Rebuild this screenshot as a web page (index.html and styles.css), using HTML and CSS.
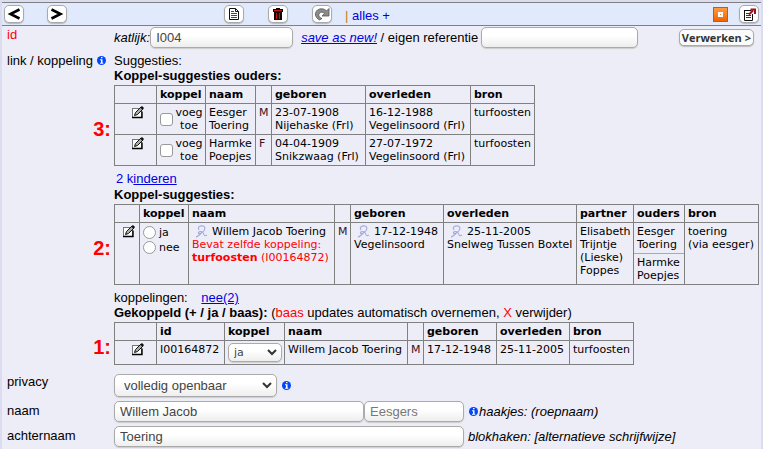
FILE: index.html
```html
<!DOCTYPE html>
<html lang="nl">

<head>
    <meta charset="UTF-8">
    <meta name="viewport" content="width=device-width, initial-scale=1.0">
    <title>Persoon</title>
    <link rel="stylesheet" href="styles.css">
</head>

<body>
    <svg class="symbols" aria-hidden="true">
        <symbol id="edit" viewBox="0 0 13 13">
            <rect x="1.5" y="2.5" width="9" height="9" fill="#fff" stroke="#777" />
            <path d="M1 11.5h10v-6" fill="none" stroke="#000" stroke-width="1.4" />
            <path d="M3.5 9.5l1-3 5.5-5.5 2 2-5.5 5.5z" fill="#aaa" stroke="#111" />
            <path d="M9 1.5l2-1.5 2 2-1.5 2z" fill="#111" />
        </symbol>
        <symbol id="info" viewBox="0 0 9 9">
            <circle cx="4.5" cy="4.5" r="4.5" fill="#0046ff" />
            <path d="M4 1h1.5v1.3H4zM3 3.3h2.5v3.4h.8v1H3v-1h1V4.300H3z" fill="#fff" />
        </symbol>
        <symbol id="sign" viewBox="0 0 13 13">
            <path d="M4 5C2 2 5 .5 8 1c3 .6 2 5-1 6.500C4.500 9 3 9 3.500 7.500 4 6 8 6 8.500 8.500c.3 1.500 1 3 3.500 1.500M6.500 8C5 9.500 3 11.500 1 12" fill="none" stroke="#a3abe0" stroke-width="1.1" />
        </symbol>
    </svg>

    <div class="page">
        <div class="toolbar">
            <div class="nav">
                <button class="btn" aria-label="vorige"><svg width="14" height="12" viewBox="0 0 14 12"><path d="M12.500 1.500L3.500 6l9 4.500" fill="none" stroke="#000" stroke-width="2.600" /></svg></button>
                <button class="btn" aria-label="volgende"><svg width="14" height="12" viewBox="0 0 14 12"><path d="M1.500 1.500l9 4.500-9 4.500" fill="none" stroke="#000" stroke-width="2.600" /></svg></button>
            </div>
            <div class="tools">
                <button class="btn" aria-label="nieuw"><svg width="10" height="12" viewBox="0 0 10 12"><path d="M.5.500h6l3 3v8h-9zM6.500.500v3h3" fill="#fff" stroke="#111" /><path d="M2 3.500h3M2 5.500h6M2 7.500h6M2 9.500h6" stroke="#445" /></svg></button>
                <button class="btn" aria-label="verwijderen"><svg width="10" height="12" viewBox="0 0 10 12"><path d="M3 0h4v1h3v3H0V1h3zM1 4h8v8H1z" fill="#180000" /><path d="M1 2.500h8M3.500 5v6M6.500 5v6" stroke="#c41414" /></svg></button>
                <button class="btn" aria-label="herhalen"><svg width="17" height="14" viewBox="0 0 17 14"><path d="M5.500 13C1 10.500 0 6 3.500 3c3-2 7-1.500 9 1l2.500-2.500V9H8l2.500-2.500C8.500 4.500 6 5 5 7c-.6 1.500 0 3.500 3 4.500z" fill="#8b8b8b" stroke="#555" stroke-width=".8" /></svg></button>
            </div>
            <div class="all"><span class="bar">|</span> <a href="#">alles +</a></div>
            <div class="right">
                <button class="orange" aria-label="venster"><svg width="5" height="5" viewBox="0 0 5 5"><path d="M1 1h3v3H1z" fill="none" stroke="#fff" stroke-width="2" /></svg></button>
                <button class="btn" aria-label="openen"><svg width="13" height="13" viewBox="0 0 13 13"><path d="M1 2.500h7M1.500 2v10.500h8V6" fill="none" stroke="#111" /><path d="M3 5.500h3M3 7.500h5M3 9.500h5" stroke="#333" /><path d="M6 6.500l4-4M7.500 1.500H12V6" fill="none" stroke="#a0101c" stroke-width="2" /></svg></button>
            </div>
        </div>

        <form class="form">
            <div class="row first-row">
                <div class="label red">id</div>
                <div class="line">
                    <label for="ref"><i>katlijk:</i></label><input id="ref" class="field ref" value="I004">
                    <span class="own"><a class="link" href="#"><i>save as new!</i></a> / <label for="own">eigen referentie</label></span>
                    <input id="own" class="field own-ref">
                    <button class="process" type="button">Verwerken &gt;</button>
                </div>
            </div>

            <div class="row links">
                <div class="label">link / koppeling <svg class="info"><use href="#info" /></svg></div>
                <div class="content">
                    <div>Suggesties:</div>
                    <b>Koppel-suggesties ouders:</b>
                    <div class="grid">
                        <span class="step">3:</span>
                        <table class="parents">
                            <colgroup><col class="w42"><col class="w49"><col class="w50"><col class="w16"><col class="w94"><col class="w105"><col class="w64"></colgroup>
                            <tr><th></th><th>koppel</th><th>naam</th><th></th><th>geboren</th><th>overleden</th><th>bron</th></tr>
                            <tr>
                                <td class="edit"><svg class="icon"><use href="#edit" /></svg></td>
                                <td><label class="add"><input class="check" type="checkbox"><span>voeg toe</span></label></td>
                                <td>Eesger Toering</td><td class="sex">M</td>
                                <td>23-07-1908<br>Nijehaske (Frl)</td><td>16-12-1988<br>Vegelinsoord (Frl)</td><td>turfoosten</td>
                            </tr>
                            <tr>
                                <td class="edit"><svg class="icon"><use href="#edit" /></svg></td>
                                <td><label class="add"><input class="check" type="checkbox"><span>voeg toe</span></label></td>
                                <td>Harmke Poepjes</td><td class="sex">F</td>
                                <td>04-04-1909<br>Snikzwaag (Frl)</td><td>27-07-1972<br>Vegelinsoord (Frl)</td><td>turfoosten</td>
                            </tr>
                        </table>
                    </div>

                    <div class="children"><a href="#">2 k<u>inderen</u></a></div>
                    <b>Koppel-suggesties:</b>
                    <div class="grid">
                        <span class="step">2:</span>
                        <table class="persons">
                            <colgroup><col class="w25"><col class="w49"><col class="w146"><col class="w16"><col class="w93"><col class="w133"><col class="w57"><col class="w51"><col class="w74"></colgroup>
                            <tr><th></th><th>koppel</th><th>naam</th><th></th><th>geboren</th><th>overleden</th><th>partner</th><th>ouders</th><th>bron</th></tr>
                            <tr>
                                <td class="edit"><svg class="icon"><use href="#edit" /></svg></td>
                                <td>
                                    <label class="choice"><input class="radio" type="radio" name="koppel">ja</label>
                                    <label class="choice"><input class="radio" type="radio" name="koppel">nee</label>
                                </td>
                                <td><div class="signed"><svg class="sign"><use href="#sign" /></svg>Willem Jacob Toering</div><span class="red">Bevat zelfde koppeling: <b>turfoosten</b> (I00164872)</span></td>
                                <td class="sex">M</td>
                                <td><div class="signed"><svg class="sign"><use href="#sign" /></svg>17-12-1948</div>Vegelinsoord</td>
                                <td><div class="signed"><svg class="sign"><use href="#sign" /></svg>25-11-2005</div>Snelweg Tussen Boxtel</td>
                                <td>Elisabeth Trijntje (Lieske) Foppes</td>
                                <td class="split"><div class="father">Eesger Toering</div><div class="mother">Harmke Poepjes</div></td>
                                <td>toering<br>(via eesger)</td>
                            </tr>
                        </table>
                    </div>

                    <div class="counts">koppelingen: <a class="link" href="#">nee(2)</a></div>
                    <div><b>Gekoppeld (+ / ja / baas):</b> (<span class="red">baas</span> updates automatisch overnemen, <span class="red">X</span> verwijder)</div>
                    <div class="grid">
                        <span class="step">1:</span>
                        <table class="linked">
                            <colgroup><col class="w42"><col class="w68"><col class="w60"><col class="w123"><col class="w16"><col class="w73"><col class="w73"><col class="w64"></colgroup>
                            <tr><th></th><th>id</th><th>koppel</th><th>naam</th><th></th><th>geboren</th><th>overleden</th><th>bron</th></tr>
                            <tr>
                                <td class="edit"><svg class="icon"><use href="#edit" /></svg></td>
                                <td>I00164872</td>
                                <td><select class="field small" aria-label="koppel"><option>ja</option><option>nee</option></select></td>
                                <td>Willem Jacob Toering</td><td class="sex">M</td><td>17-12-1948</td><td>25-11-2005</td><td>turfoosten</td>
                            </tr>
                        </table>
                    </div>
                </div>
            </div>

            <div class="row privacy">
                <label class="label" for="privacy">privacy</label>
                <div class="line"><select id="privacy" class="field open"><option>volledig openbaar</option></select><svg class="info"><use href="#info" /></svg></div>
            </div>
            <div class="row">
                <label class="label" for="name">naam</label>
                <div class="line"><input id="name" class="field first" value="Willem Jacob"><input class="field patronym" aria-label="patroniem" placeholder="Eesgers"><svg class="info"><use href="#info" /></svg><i>haakjes: (roepnaam)</i></div>
            </div>
            <div class="row">
                <label class="label" for="surname">achternaam</label>
                <div class="line"><input id="surname" class="field surname" value="Toering"><i class="note">blokhaken: [alternatieve schrijfwijze]</i></div>
            </div>
        </form>
    </div>
</body>

</html>
```

FILE: styles.css
```css
* {
    box-sizing: border-box;
}

body {
    margin: 0;
    padding: 2px 2px 0;
    background: #dcdcf0;
    color: #000;
    font: 13px/15px "Liberation Sans", Arial, sans-serif;
}

.page {
    min-height: calc(100vh - 2px);
    background: #ededf7;
}

.symbols {
    display: none;
}

svg {
    flex: none;
}

a {
    color: #0000e0;
    text-decoration: none;
}

.link {
    text-decoration: underline;
}

.red {
    color: #f00;
}

/* toolbar */
.toolbar {
    display: flex;
    align-items: center;
    height: 24px;
    padding: 0 2px;
    background: #e0eafc;
    border-top: 1px solid #808080;
    border-bottom: 1px solid #808080;
}

.nav,
.tools,
.right {
    display: flex;
    align-items: center;
    gap: 24px;
}

.nav {
    gap: 23px;
    width: 220px;
}

.all {
    margin-left: 13px;
    padding-top: 2px;
}

.bar {
    color: #c87820;
}

.right {
    gap: 11px;
    margin-left: auto;
}

.btn,
.orange {
    display: flex;
    align-items: center;
    justify-content: center;
    width: 20px;
    height: 18px;
    padding: 0;
    background: #fff;
    border: 1px solid #aaa;
    border-radius: 5px;
    box-shadow: 0 1px 1px #bbb;
}

.orange {
    width: 15px;
    height: 15px;
    background: linear-gradient(#ff9a42, #f06400);
    border-color: #c65a14;
    border-radius: 0;
    box-shadow: none;
}

/* form rows */
.row {
    display: grid;
    grid-template-columns: 107px 1fr;
    padding-left: 5px;
    margin-bottom: 4px;
}

.first-row {
    margin-bottom: 5px;
}

.label {
    padding-top: 2px;
}

.first-row .label,
.links .label,
.privacy .label {
    padding-top: 0;
}

.line {
    display: flex;
    align-items: center;
}

.form {
    padding-top: 1px;
}

.field {
    height: 21px;
    padding: 0 5px;
    color: #444;
    font: 13px/15px "Liberation Sans", Arial, sans-serif;
    background: linear-gradient(#fff 40%, #eee);
    border: 1px solid #aaa;
    border-radius: 5px;
    box-shadow: 0 1px 1px #ccc;
}

.field::placeholder {
    color: #777;
}

select.field {
    padding-right: 16px;
    appearance: none;
    background: url("data:image/svg+xml,%3Csvg xmlns='http://www.w3.org/2000/svg' width='10' height='7'%3E%3Cpath d='M1 1l4 4 4-4' fill='none' stroke='%23333' stroke-width='2'/%3E%3C/svg%3E") no-repeat right 4px center, linear-gradient(#fff 40%, #eee);
}

.ref {
    width: 143px;
}

.own {
    margin: 0 3px 0 8px;
}

.own-ref {
    width: 157px;
}

.process {
    height: 17px;
    margin: 0 7px 0 auto;
    padding: 0 2px;
    color: #333;
    font: bold 11px/14px "Open Sans", sans-serif;
    background: #fbfbfb;
    border: 1px solid #aaa;
    border-radius: 5px;
    box-shadow: 0 1px 1px #bbb;
}

.info {
    width: 9px;
    height: 9px;
}

.line .info {
    margin: 0 1px 0 5px;
}

.open {
    width: 163px;
    height: 23px;
    padding-left: 9px;
}

.privacy {
    margin-top: 9px;
}

.first {
    width: 250px;
}

.patronym {
    width: 100px;
}

.surname {
    width: 350px;
}

.note {
    margin-left: 4px;
}

/* tables */
.grid {
    position: relative;
    margin-top: 2px;
}

.step {
    position: absolute;
    top: calc(50% - 9px);
    right: calc(100% + 3px);
    color: #f00;
    font: bold 20px/24px "Liberation Sans", Arial, sans-serif;
}

table {
    table-layout: fixed;
    width: 0;
    border-collapse: collapse;
    font: 11px/13px "DejaVu Sans", Verdana, sans-serif;
}

th,
td {
    height: 18px;
    padding: 2px 0 2px 3px;
    text-align: left;
    vertical-align: top;
    white-space: nowrap;
    border: 1px solid #808080;
}

td {
    white-space: normal;
}

.edit {
    text-align: center;
}

.icon {
    width: 13px;
    height: 13px;
}

.sex {
    color: #401020;
}

.add {
    display: flex;
    align-items: center;
    text-align: center;
}

.check,
.radio {
    flex: none;
    width: 13px;
    height: 13px;
    margin: 0;
    appearance: none;
    background: #fff;
    border: 1px solid #999;
    border-radius: 3px;
}

.radio {
    border-radius: 50%;
}

.choice {
    display: flex;
    align-items: center;
    gap: 3px;
    height: 15px;
}

.signed {
    display: flex;
    gap: 4px;
    white-space: nowrap;
}

.sign {
    width: 13px;
    height: 13px;
    margin-left: 3px;
}

.split {
    padding: 0;
}

.father,
.mother {
    padding: 2px 0 2px 3px;
}

.father {
    border-bottom: 1px solid #aaa;
}

.small {
    display: block;
    width: 54px;
    height: 19px;
    font: 11px/13px "DejaVu Sans", Verdana, sans-serif;
}

.children {
    margin: 5px 0 1px;
    padding-left: 2px;
}

.counts {
    margin-top: 5px;
}

.counts .link {
    margin-left: 10px;
}

.links {
    margin-bottom: 0;
}

.links + .privacy {
    margin-top: 9px;
}

.w16 { width: 16px; }
.w25 { width: 25px; }
.w42 { width: 42px; }
.w49 { width: 49px; }
.w50 { width: 50px; }
.w51 { width: 51px; }
.w57 { width: 57px; }
.w60 { width: 60px; }
.w64 { width: 64px; }
.w68 { width: 68px; }
.w73 { width: 73px; }
.w74 { width: 74px; }
.w93 { width: 93px; }
.w94 { width: 94px; }
.w105 { width: 105px; }
.w123 { width: 123px; }
.w133 { width: 133px; }
.w146 { width: 146px; }
```
